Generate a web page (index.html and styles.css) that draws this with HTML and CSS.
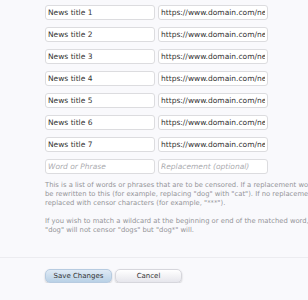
FILE: index.html
```html
<!DOCTYPE html>
<html lang="en">
<head>
    <meta charset="UTF-8">
    <title>Censoring Options</title>
    <link rel="stylesheet" href="styles.css">
</head>
<body>
    <form class="censor-form">
        <!-- Censored words -->
        <ul class="word-list">
            <li><input type="text" value="News title 1"><input type="text" value="https://www.domain.com/news/1"></li>
            <li><input type="text" value="News title 2"><input type="text" value="https://www.domain.com/news/2"></li>
            <li><input type="text" value="News title 3"><input type="text" value="https://www.domain.com/news/3"></li>
            <li><input type="text" value="News title 4"><input type="text" value="https://www.domain.com/news/4"></li>
            <li><input type="text" value="News title 5"><input type="text" value="https://www.domain.com/news/5"></li>
            <li><input type="text" value="News title 6"><input type="text" value="https://www.domain.com/news/6"></li>
            <li><input type="text" value="News title 7"><input type="text" value="https://www.domain.com/news/7"></li>
            <li><input type="text" placeholder="Word or Phrase"><input type="text" placeholder="Replacement (optional)"></li>
        </ul>

        <div class="explain">
            <p>This is a list of words or phrases that are to be censored. If a replacement word is specified, the censored word will<br>
            be rewritten to this (for example, replacing "dog" with "cat"). If no replacement is specified, the censored word will be<br>
            replaced with censor characters (for example, "***").</p>
            <p>If you wish to match a wildcard at the beginning or end of the matched word, add an asterisk (*). For example,<br>
            "dog" will not censor "dogs" but "dog*" will.</p>
        </div>

        <!-- Submit Buttons -->
        <div class="submit-row">
            <button type="submit" class="button primary">Save Changes</button>
            <button type="reset" class="button">Cancel</button>
        </div>
    </form>
</body>
</html>
```

FILE: styles.css
```css
body {
    margin: 0;
    background-color: #f9f9fc;
    font-family: 'DejaVu Sans', sans-serif;
    overflow: hidden;
}

.censor-form {
    width: 760px;
}

/* Word List */
.word-list {
    list-style: none;
    margin: 0;
    padding: 5px 0 0 45px;
    display: flex;
    flex-direction: column;
    gap: 7px;
}

.word-list li {
    display: flex;
    gap: 3px;
}

.word-list input {
    width: 110px;
    height: 15px;
    box-sizing: border-box;
    padding: 0 2px;
    margin: 0;
    border: 1px solid #dcdcdf;
    border-radius: 3px;
    background-color: #ffffff;
    color: #333333;
    font-family: 'DejaVu Sans', sans-serif;
    font-size: 7.5px;
    outline: none;
}

.word-list input::placeholder {
    color: #acacb0;
    font-style: italic;
}

/* Explain Text */
.explain {
    padding: 7px 0 0 45px;
    color: #949498;
    font-size: 6.8px;
    line-height: 9px;
    white-space: nowrap;
}

.explain p {
    margin: 0 0 9px;
}

/* Submit Row */
.submit-row {
    margin-top: 22px;
    border-top: 1px solid #ececf0;
    padding: 11px 0 0 45px;
    display: flex;
    gap: 3px;
}

.button {
    width: 67px;
    height: 14px;
    padding: 0;
    border: 1px solid #d6d6dc;
    border-radius: 5px;
    background: linear-gradient(#ffffff, #e6e6ec);
    box-shadow: 0 1px 2px rgba(0, 0, 0, 0.2);
    color: #333333;
    font-family: 'DejaVu Sans', sans-serif;
    font-size: 7px;
    cursor: pointer;
}

.button.primary {
    border-color: #b7cbe0;
    background: linear-gradient(#dfeaf5, #b9d1e6);
}
```
